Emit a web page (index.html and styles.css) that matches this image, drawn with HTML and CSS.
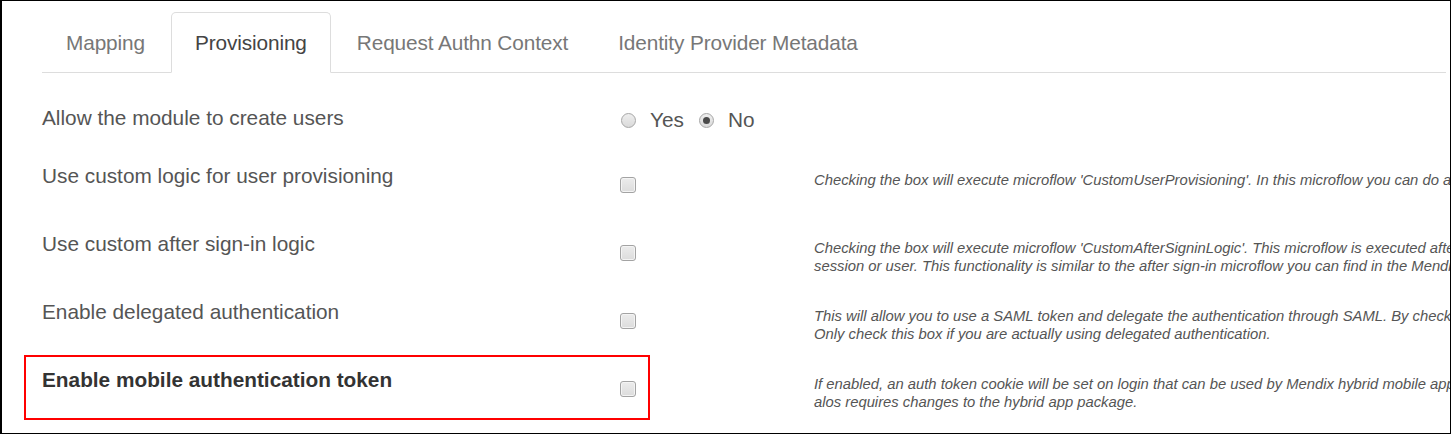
FILE: index.html
```html
<!DOCTYPE html>
<html>
<head>
<meta charset="utf-8">
<link rel="stylesheet" href="styles.css">
</head>
<body>
<div class="frame">
  <ul class="tabs">
    <li class="tab"><a>Mapping</a></li>
    <li class="tab active"><a>Provisioning</a></li>
    <li class="tab"><a>Request Authn Context</a></li>
    <li class="tab"><a>Identity Provider Metadata</a></li>
  </ul>
  <div class="form">
    <div class="row row-first">
      <div class="label">Allow the module to create users</div>
      <div class="control radios">
        <span class="radio"></span><span class="radio-text">Yes</span>
        <span class="radio checked"></span><span class="radio-text">No</span>
      </div>
      <div class="help"></div>
    </div>
    <div class="row">
      <div class="label">Use custom logic for user provisioning</div>
      <div class="control"><span class="checkbox"></span></div>
      <div class="help">Checking the box will execute microflow 'CustomUserProvisioning'. In this microflow you can do additional user provisioning.</div>
    </div>
    <div class="row">
      <div class="label">Use custom after sign-in logic</div>
      <div class="control"><span class="checkbox"></span></div>
      <div class="help">Checking the box will execute microflow 'CustomAfterSigninLogic'. This microflow is executed after the user has been signed in and allows you to change the<br>session or user. This functionality is similar to the after sign-in microflow you can find in the Mendix project settings.</div>
    </div>
    <div class="row">
      <div class="label">Enable delegated authentication</div>
      <div class="control"><span class="checkbox"></span></div>
      <div class="help">This will allow you to use a SAML token and delegate the authentication through SAML. By checking this box the module will accept SAML tokens.<br>Only check this box if you are actually using delegated authentication.</div>
    </div>
    <div class="row">
      <div class="highlight"></div>
      <div class="label bold">Enable mobile authentication token</div>
      <div class="control"><span class="checkbox"></span></div>
      <div class="help">If enabled, an auth token cookie will be set on login that can be used by Mendix hybrid mobile apps. Please note that this<br>alos requires changes to the hybrid app package.</div>
    </div>
  </div>
</div>
</body>
</html>
```

FILE: styles.css
```css
html, body {
  margin: 0;
  padding: 0;
  background: #fff;
}

body {
  width: 1451px;
  height: 434px;
  overflow: hidden;
  font-family: "Liberation Sans", Arial, sans-serif;
}

.frame {
  box-sizing: border-box;
  width: 1451px;
  height: 434px;
  border-style: solid;
  border-color: #000;
  border-width: 1px 1px 1px 2px;
  padding: 11px 4px 0 40px;
  overflow: hidden;
}

.tabs {
  display: flex;
  margin: 0;
  padding: 0;
  list-style: none;
  border-bottom: 1px solid #dddddd;
}

.tab {
  margin: 0 2px -1px 0;
}

.tab a {
  display: block;
  padding: 15px 23px;
  line-height: 29px;
  font-size: 20.8px;
  letter-spacing: -0.12px;
  color: #777;
  border: 1px solid transparent;
  border-radius: 5px 5px 0 0;
}

.tab.active a {
  color: #444;
  background: #fff;
  border-color: #dddddd;
  border-bottom-color: #fff;
}

.form {
  margin-top: 31px;
}

.row {
  position: relative;
  display: grid;
  grid-template-columns: 578px 194px 1300px;
  align-items: start;
  height: 68px;
}

.row-first {
  height: 58px;
}

.label {
  font-size: 20.8px;
  line-height: 28px;
  color: #555;
  white-space: nowrap;
}

.label.bold {
  font-weight: bold;
  color: #333;
}

.control {
  display: flex;
}

.checkbox {
  display: block;
  box-sizing: border-box;
  width: 16px;
  height: 16px;
  margin-top: 15px;
  border: 1px solid #a3a3a3;
  border-radius: 3px;
  background: linear-gradient(#ececec, #dcdcdc);
  box-shadow: inset 0 0 0 1px #f4f4f4;
}

.radios {
  align-items: center;
  height: 28px;
  padding-top: 2px;
  font-size: 20.8px;
  color: #555;
}

.radio {
  position: relative;
  display: block;
  box-sizing: border-box;
  width: 15px;
  height: 15px;
  border: 1px solid #a6a6a6;
  border-radius: 50%;
  background: linear-gradient(#eeeeee, #dadada);
  margin-left: 1px;
}

.radio.checked::after {
  content: "";
  position: absolute;
  left: 3px;
  top: 3px;
  width: 7px;
  height: 7px;
  border-radius: 50%;
  background: #4a4a4a;
}

.radio-text {
  margin-left: 14px;
  margin-right: 14px;
  line-height: 28px;
}

.help {
  margin-top: 9px;
  font-size: 14.8px;
  line-height: 18px;
  font-style: italic;
  color: #555;
  white-space: nowrap;
}

.highlight {
  position: absolute;
  left: -18px;
  top: -11px;
  width: 626px;
  height: 65px;
  box-sizing: border-box;
  border: 2px solid #ff0000;
  pointer-events: none;
}
```
